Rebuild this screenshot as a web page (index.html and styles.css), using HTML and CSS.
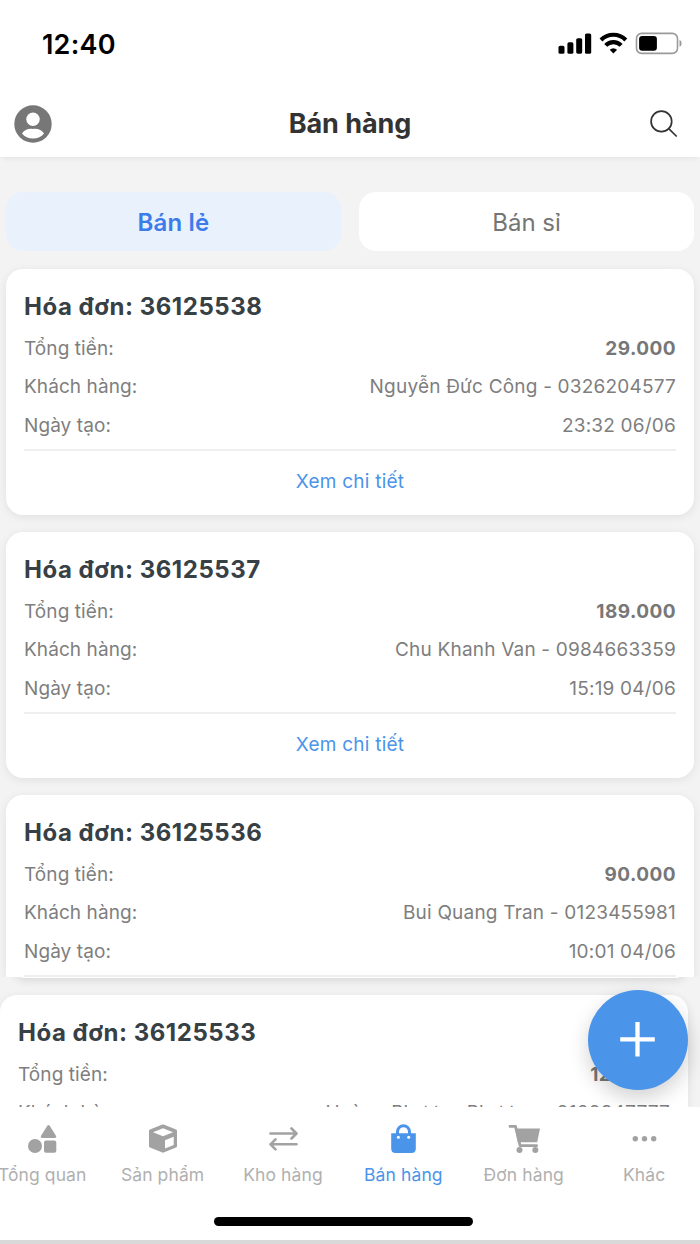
FILE: index.html
```html
<!DOCTYPE html>
<html lang="vi">
<head>
<meta charset="utf-8">
<title>Bán hàng</title>
<link rel="stylesheet" href="styles.css">
</head>
<body>
<div class="screen">
  <div class="status">
    <span class="clock">12:40</span>
    <svg class="status-icons" viewBox="0 0 126 24" width="126" height="24">
      <g fill="#000">
        <rect x="0.5" y="13.8" width="6" height="8" rx="1.6"/>
        <rect x="9.400" y="10.300" width="6" height="11.5" rx="1.6"/>
        <rect x="18.200" y="6.200" width="6" height="15.5" rx="1.6"/>
        <rect x="27" y="1.500" width="6.2" height="20.3" rx="1.6"/>
      </g>
      <g transform="translate(2.700 0)">
        <g fill="none" stroke="#000" stroke-width="4.200">
          <path d="M40.300 7.900a17.500 17.500 0 0 1 24.800 0"/>
          <path d="M45 13.400a10.800 10.800 0 0 1 15.400 0"/>
        </g>
        <path d="M49 17.800a5.800 5.800 0 0 1 7.400 0l-3.700 3.700z"/>
      </g>
      <g transform="translate(2.300 0)">
        <rect x="76.2" y="1.400" width="41" height="20" rx="5.2" fill="none" stroke="#9a9a9a" stroke-width="1.600"/>
        <rect x="78.8" y="4" width="17.800" height="14.8" rx="3" fill="#000"/>
        <path d="M119.200 8c2.800 1 2.800 5.800 0 6.800z" fill="#9a9a9a"/>
      </g>
    </svg>
  </div>
  <header class="header">
    <svg class="avatar" viewBox="0 0 38 38" width="38" height="38">
      <circle cx="19" cy="19" r="18.700" fill="#777"/>
      <circle cx="19" cy="14.300" r="6.700" fill="#fff"/>
      <path d="M8 28.500c2-3.800 7-5.500 11-4.600 4-.9 9 .8 11 4.600-2.500 3.300-6.500 5-11 5s-8.500-1.700-11-5z" fill="#fff"/>
    </svg>
    <h1 class="title">Bán hàng</h1>
    <svg class="search" viewBox="0 0 28 28" width="28" height="28" fill="none" stroke="#333" stroke-width="1.700">
      <circle cx="11.400" cy="11.400" r="10.300"/><path d="M18.700 18.700l8 7.800"/>
    </svg>
  </header>
  <main class="content">
    <div class="tabs">
      <div class="tab active">Bán lẻ</div>
      <div class="tab">Bán sỉ</div>
    </div>
    <div class="list">
      <article class="card">
        <h2>Hóa đơn: 36125538</h2>
        <div class="row"><span class="label">Tổng tiền:</span><b>29.000</b></div>
        <div class="row"><span class="label">Khách hàng:</span><span>Nguyễn Đức Công - 0326204577</span></div>
        <div class="row"><span class="label">Ngày tạo:</span><span>23:32 06/06</span></div>
        <div class="more">Xem chi tiết</div>
      </article>
      <article class="card">
        <h2>Hóa đơn: 36125537</h2>
        <div class="row"><span class="label">Tổng tiền:</span><b>189.000</b></div>
        <div class="row"><span class="label">Khách hàng:</span><span>Chu Khanh Van - 0984663359</span></div>
        <div class="row"><span class="label">Ngày tạo:</span><span>15:19 04/06</span></div>
        <div class="more">Xem chi tiết</div>
      </article>
      <article class="card cut">
        <h2>Hóa đơn: 36125536</h2>
        <div class="row"><span class="label">Tổng tiền:</span><b>90.000</b></div>
        <div class="row"><span class="label">Khách hàng:</span><span>Bui Quang Tran - 0123455981</span></div>
        <div class="row"><span class="label">Ngày tạo:</span><span>10:01 04/06</span></div>
        <div class="more"></div>
      </article>
    </div>
    <div class="list next">
      <article class="card">
        <h2>Hóa đơn: 36125533</h2>
        <div class="row"><span class="label">Tổng tiền:</span><b>120.000</b></div>
        <div class="row"><span class="label">Khách hàng:</span><span>Hoàng Phương Phương - 0102347777</span></div>
      </article>
      <button class="fab"><svg viewBox="0 0 36 36" width="36" height="36"><path d="M17.500 0v34.500M.2 17.300h34.600" stroke="#fff" stroke-width="4.300"/></svg></button>
    </div>
  </main>
  <nav class="nav">
    <div class="item"><svg viewBox="0 0 30 30" width="30" height="30" fill="#a2a2a2"><path d="M20.300 1.800q1.200-1.600 2.400 0l6.400 10.300q.8 1.800-1.100 1.800H15q-1.900 0-1.100-1.800z"/><circle cx="8" cy="22" r="7"/><rect x="17" y="16.500" width="12.300" height="12.300" rx="2"/></svg><span>Tổng quan</span></div>
    <div class="item"><svg viewBox="0 0 30 30" width="30" height="30"><path d="M15 2L27.500 7V22.200L15 27.200 2.500 22.200V7z" fill="#a2a2a2" stroke="#a2a2a2" stroke-width="3" stroke-linejoin="round"/><path d="M15 4.300l10 3.900L15 12.300 5 8.200z M17 16.300l8.700-3.600v8.300L17 24.600z" fill="#fff"/></svg><span>Sản phẩm</span></div>
    <div class="item"><svg viewBox="0 0 30 30" width="30" height="30" fill="none" stroke="#a2a2a2" stroke-width="2.600" stroke-linecap="round" stroke-linejoin="round"><path d="M2.500 9.500h26M23.500 4.500l5 5-5 5M28.500 20.300h-26M7.500 15.300l-5 5 5 5"/></svg><span>Kho hàng</span></div>
    <div class="item on"><svg viewBox="0 0 30 30" width="30" height="30"><path d="M9.500 12V7.800a6 6 0 0 1 12 0v4.200" fill="none" stroke="#4a94ea" stroke-width="3"/><path d="M3.200 9.300h24.600v15.200q0 4.500-4.500 4.500H7.700q-4.500 0-4.500-4.500z" fill="#4a94ea"/><circle cx="10.400" cy="13.200" r="1.500" fill="#fff"/><circle cx="20.700" cy="13.200" r="1.500" fill="#fff"/></svg><span>Bán hàng</span></div>
    <div class="item"><svg viewBox="0 0 32 30" width="32" height="30" fill="#a2a2a2"><path d="M7 4.500h25l-2.800 13.700H9.800z"/><path d="M2 2.400h5.500l4.600 19.300h16.500" fill="none" stroke="#a2a2a2" stroke-width="2.800" stroke-linecap="round" stroke-linejoin="round"/><circle cx="11.500" cy="26" r="3"/><circle cx="27.300" cy="26" r="3"/></svg><span>Đơn hàng</span></div>
    <div class="item"><svg viewBox="0 0 30 30" width="30" height="30" fill="#a2a2a2"><circle cx="6.300" cy="14.700" r="2.700"/><circle cx="15.500" cy="14.700" r="2.700"/><circle cx="24.700" cy="14.700" r="2.700"/></svg><span>Khác</span></div>
  </nav>
  <div class="home"><div class="bar"></div></div>
</div>
</body>
</html>
```
FILE: styles.css
```css
* { box-sizing: border-box; }
body { margin: 0; font-family: Inter, "Noto Sans", sans-serif; background: #fff; }
.screen { width: 700px; height: 1244px; display: flex; flex-direction: column; overflow: hidden; border-bottom: 4px solid #d9d9d9; }
.status { height: 87px; flex: none; display: flex; justify-content: space-between; align-items: center; padding: 0 16px 0 42px; }
.clock { font-size: 27px; font-weight: 600; color: #000; letter-spacing: 0.2px; padding-top: 1px; }
.header { height: 70px; flex: none; display: grid; grid-template-columns: 38px 1fr 38px; align-items: center; padding: 3px 14px 0 14px; position: relative; z-index: 1; background: #fff; box-shadow: 0 4px 5px -2px rgba(0,0,0,.06); }
.title { margin: 0; text-align: center; font-size: 27px; line-height: 36px; font-weight: 700; color: #333; letter-spacing: -0.05px; }
.header .search { justify-self: start; margin-left: 2px; }
.content { height: 950px; flex: none; background: #f3f3f3; display: flex; flex-direction: column; overflow: hidden; }
.tabs { flex: none; display: grid; grid-template-columns: 1fr 1fr; gap: 18px; padding: 35px 6px 0; }
.tab { height: 59px; border-radius: 17px; background: #fff; display: flex; align-items: center; justify-content: center; padding-top: 2px; font-size: 24px; color: #757575; }
.tab.active { background: #e9f1fd; color: #3b7bea; font-weight: 600; letter-spacing: 0.2px; }
.list { height: 726px; flex: none; padding: 18px 6px 0; display: flex; flex-direction: column; gap: 17px; overflow: hidden; }
.card { flex: none; height: 246px; background: #fff; border-radius: 17px; padding: 19px 18px 0; box-shadow: 0 2px 10px rgba(0,0,0,.08); }
.card h2 { margin: 0 0 4.6px; font-size: 24px; line-height: 37px; font-weight: 700; color: #374045; letter-spacing: 0.53px; }
.row { display: flex; justify-content: space-between; height: 38.5px; line-height: 38.5px; font-size: 19px; color: #7e7e7e; letter-spacing: 0.2px; }
.row .label { letter-spacing: 0.08px; }
.row b { font-weight: 700; color: #777; letter-spacing: 0.45px; }
.more { border-top: 2px solid #efefef; margin-top: 4.4px; text-align: center; line-height: 62px; font-size: 19px; color: #4a94ea; letter-spacing: 0.24px; }
.card.cut { height: 183px; border-radius: 17px 17px 0 0; }
.next { height: 130px; padding: 18px 12px 0 0; position: relative; }
.next::before { content: ""; position: absolute; left: 14px; top: -10px; width: 672px; height: 11px; background: #fff; border-radius: 0 0 12px 12px; box-shadow: 0 2px 10px rgba(0,0,0,.13); }
.next .card { height: 112px; border-radius: 17px 17px 0 0; position: relative; }
.fab { position: absolute; left: 588px; top: 13px; width: 100px; height: 100px; border: 0; border-radius: 50%; background: #4a94ea; display: flex; align-items: center; justify-content: center; box-shadow: 0 8px 20px rgba(0,0,0,.18); padding: 0; }
.nav { height: 93px; flex: none; display: grid; grid-template-columns: repeat(6, 120.4px); margin-left: -18px; padding-top: 17px; }
.item { display: flex; flex-direction: column; align-items: center; gap: 8px; font-size: 17.5px; line-height: 26px; color: #b0b0b0; letter-spacing: 0.1px; white-space: nowrap; }
.item.on { color: #4a94ea; }
.home { flex: 1; display: flex; justify-content: center; align-items: flex-start; padding: 17px 13px 0 0; }
.bar { width: 259px; height: 9px; border-radius: 5px; background: #000; }
```
